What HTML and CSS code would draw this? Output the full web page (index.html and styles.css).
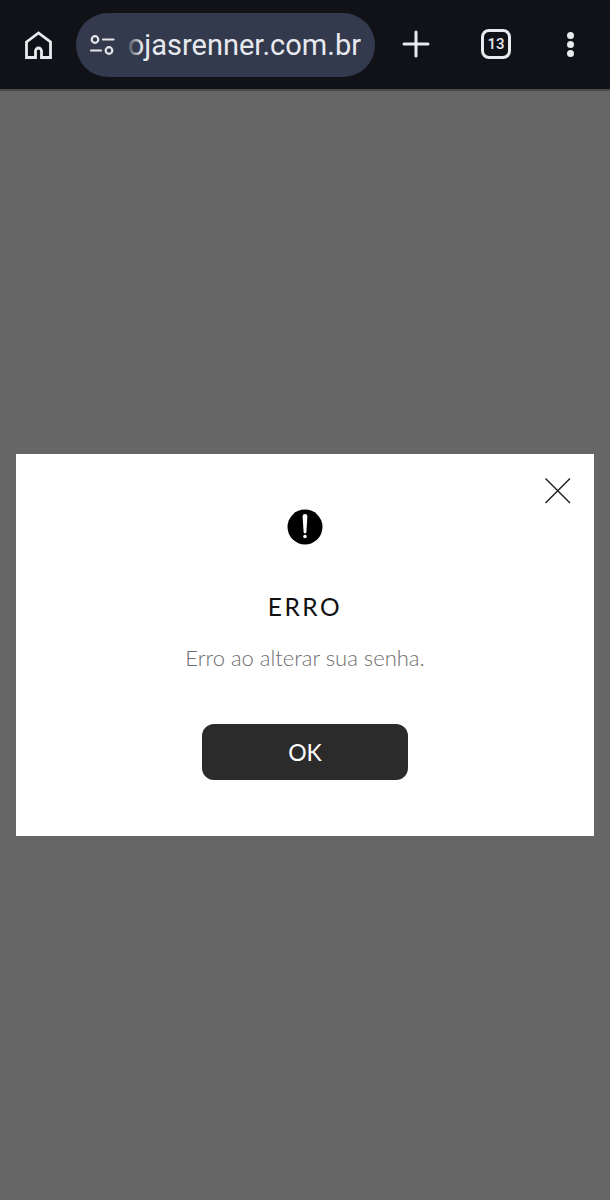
FILE: index.html
```html
<!DOCTYPE html>
<html lang="pt-BR">
<head>
<meta charset="utf-8">
<title>Erro</title>
<link rel="stylesheet" href="styles.css">
</head>
<body>
<div class="page">
  <header class="toolbar">
    <button class="tool home" aria-label="Início">
      <svg width="30" height="30" viewBox="0 0 30 30" fill="none" stroke="#e9eaee" stroke-width="2.800" stroke-linejoin="miter"><path d="M3.500 13 15.500 4 27.500 13V28.500H18.500V22a3 3 0 0 0-6 0v6.500H3.500Z"/></svg>
    </button>
    <div class="pill">
      <svg class="tune" width="26" height="22" viewBox="0 0 26 22" fill="none" stroke="#e3e5ea" stroke-width="2.200" stroke-linecap="round"><circle cx="6" cy="5.500" r="3.300"/><path d="M14 5.500h10.500"/><path d="M2 16.500h10"/><circle cx="20" cy="16.500" r="3.300"/></svg>
      <div class="url"><span class="url-text">lojasrenner.com.br</span></div>
    </div>
    <button class="tool plus" aria-label="Nova guia">
      <svg width="28" height="28" viewBox="0 0 28 28" stroke="#e9eaee" stroke-width="3" stroke-linecap="round"><path d="M14 2v24M2 14h24"/></svg>
    </button>
    <button class="tool tabs" aria-label="13 guias"><span class="tab-count">13</span></button>
    <button class="tool menu" aria-label="Menu">
      <span class="dot"></span><span class="dot"></span><span class="dot"></span>
    </button>
  </header>
  <main class="overlay">
    <section class="modal">
      <button class="close" aria-label="Fechar">
        <svg width="28" height="28" viewBox="0 0 28 28" stroke="#1a1a1a" stroke-width="1.400"><path d="M1.500 1.500 26 26M26 1.500 1.500 26"/></svg>
      </button>
      <svg class="alert" width="36" height="36" viewBox="0 0 36 36"><circle cx="18" cy="18" r="17.500" fill="#000"/><path d="M15.600 7.500a2.400 2.400 0 0 1 4.800 0l-1 15.500a1.400 1.400 0 0 1-2.800 0Z" fill="#fff"/><circle cx="18" cy="27.500" r="1.800" fill="#fff"/></svg>
      <h1 class="title">ERRO</h1>
      <p class="message">Erro ao alterar sua senha.</p>
      <button class="ok">OK</button>
    </section>
  </main>
</div>
</body>
</html>
```
FILE: styles.css
```css
* { box-sizing: border-box; }
html, body { margin: 0; height: 100%; }
body { font-family: Lato, "Liberation Sans", sans-serif; background: #666; }
button { background: none; border: 0; padding: 0; font: inherit; color: inherit; }
.page { display: flex; flex-direction: column; height: 1200px; overflow: hidden; }
.toolbar {
  height: 91px; flex: none; background: #111218; border-bottom: 2px solid #4a4a4c;
  display: flex; align-items: center; padding-bottom: 1px; position: relative;
}
.tool { display: flex; align-items: center; justify-content: center; flex: none; }
.home { width: 76px; }
.pill {
  width: 299px; height: 64px; border-radius: 32px; background: #333a4d; flex: none;
  display: flex; align-items: center; padding: 0 14px 0 13px; margin-top: 2px;
}
.tune { flex: none; }
.url { flex: 1; overflow: hidden; display: flex; justify-content: flex-end; position: relative; margin-left: 13px; height: 40px; align-items: center; }
.url::before {
  content: ""; position: absolute; left: 0; top: 0; bottom: 0; width: 14px; z-index: 1;
  background: linear-gradient(90deg, rgba(51,58,77,.85), rgba(51,58,77,0));
}
.url-text { font-family: Roboto, sans-serif; font-size: 29px; color: #e8e9ee; white-space: nowrap; flex: none; }
.plus { width: 82px; }
.tabs { width: 78px; }
.tab-count {
  width: 30px; height: 30px; border: 3px solid #e9eaee; border-radius: 8px;
  font-family: Roboto, sans-serif; font-weight: 500; font-size: 15px; color: #e9eaee;
  display: flex; align-items: center; justify-content: center;
}
.menu { width: 72px; flex-direction: column; gap: 2.300px; margin-left: -1px; padding-top: 1px; }
.dot { width: 7px; height: 7px; border-radius: 50%; background: #e9eaee; }
.overlay { flex: 1; background: #666; display: flex; align-items: center; justify-content: center; padding-bottom: 1px; }
.modal {
  width: 578px; height: 382px; background: #fff; position: relative;
  display: flex; flex-direction: column; align-items: center; padding-top: 55px;
}
.close { position: absolute; top: 23px; right: 22px; width: 28px; height: 28px; display: block; }
.close svg { display: block; }
.alert { display: block; }
.title { margin: 47px 0 0; font-size: 24.500px; font-weight: 400; letter-spacing: 2.500px; line-height: 30px; color: #111; }
.message { margin: 22px 0 0; font-size: 22px; font-weight: 300; line-height: 28px; color: #6e6e6e; }
.ok {
  margin-top: 52px; width: 206px; height: 56px; border-radius: 12px; background: #2b2b2b;
  color: #fff; font-family: Lato, sans-serif; font-size: 23px; letter-spacing: 0;
}
```
